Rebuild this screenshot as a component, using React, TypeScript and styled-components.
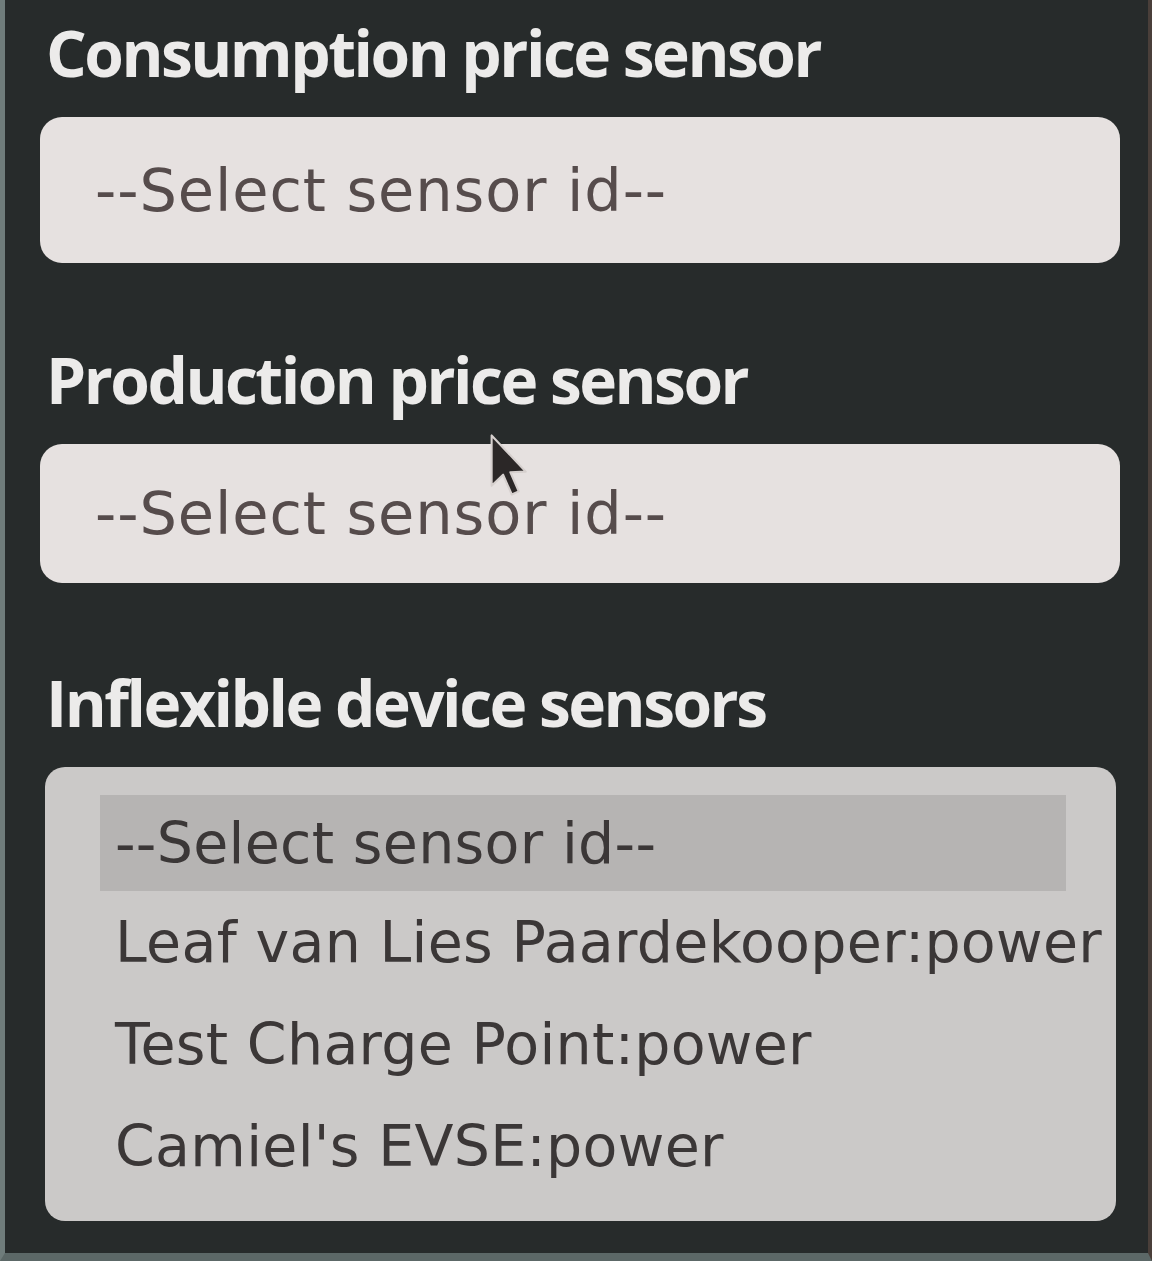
import React from "react";
import styled, { createGlobalStyle } from "styled-components";

const GlobalStyle = createGlobalStyle`
  html, body {
    margin: 0;
    padding: 0;
    background: #262a2a;
  }
  body {
    font-family: "Open Sans", "Liberation Sans", sans-serif;
  }
`;

const Frame = styled.div`
  box-sizing: border-box;
  width: 1152px;
  height: 1261px;
  background: #272b2b;
  border-left: 5px solid #6f7c7b;
  border-right: 4px solid #4a3f3a;
  border-bottom: 8px solid #5c6867;
  padding: 13px 28px 0 35px;
  display: flex;
  flex-direction: column;
  overflow: hidden;
`;

const Field = styled.div<{ $gap: number }>`
  display: flex;
  flex-direction: column;
  margin-bottom: ${(p) => p.$gap}px;
`;

const Label = styled.label`
  font-weight: 700;
  font-size: 64px;
  line-height: 80px;
  letter-spacing: -2.5px;
  color: #ecebea;
  padding-left: 6px;
  margin-bottom: 24px;
`;

const SelectBox = styled.div<{ $h: number }>`
  position: relative;
  box-sizing: border-box;
  height: ${(p) => p.$h}px;
  border-radius: 22px;
  background: #e6e1e0;
  display: flex;
  align-items: center;
  padding-left: 55px;
  font-family: "DejaVu Sans", "Open Sans", sans-serif;
  font-size: 59px;
  letter-spacing: 0.9px;
  color: #564c4c;
`;

const ListBox = styled.div`
  box-sizing: border-box;
  height: 454px;
  margin: 0 4px 0 5px;
  border-radius: 20px;
  background: #cbc9c8;
  padding: 28px 0 0 55px;
  overflow: hidden;
  display: flex;
  flex-direction: column;
`;

const Option = styled.div<{ $active?: boolean }>`
  height: 102px;
  display: flex;
  align-items: center;
  padding-left: 15px;
  margin-right: 50px;
  white-space: nowrap;
  font-family: "DejaVu Sans", "Open Sans", sans-serif;
  font-size: 57px;
  letter-spacing: 0.3px;
  color: #3b3737;
  background: ${(p) => (p.$active ? "#b6b4b3" : "transparent")};
  &:first-child {
    height: 96px;
  }
`;

const Cursor = styled.svg`
  position: absolute;
  left: 448px;
  top: -12px;
  width: 42px;
  height: 66px;
  overflow: visible;
`;

const sensors = [
  "--Select sensor id--",
  "Leaf van Lies Paardekooper:power",
  "Test Charge Point:power",
  "Camiel's EVSE:power",
];

export default function App() {
  return (
    <>
      <GlobalStyle />
      <Frame>
        <Field $gap={77}>
          <Label>Consumption price sensor</Label>
          <SelectBox $h={146}>--Select sensor id--</SelectBox>
        </Field>
        <Field $gap={80}>
          <Label>Production price sensor</Label>
          <SelectBox $h={139}>
            --Select sensor id--
            <Cursor viewBox="0 0 12 19">
              <path
                d="M1 1 L1 15.5 L4.3 12.3 L6.8 18 L8.8 17.1 L6.4 11.6 L10.8 11.4 Z"
                fill="#2b2727"
                stroke="#d6d0ce"
                strokeWidth="0.6"
                strokeLinejoin="round"
              />
            </Cursor>
          </SelectBox>
        </Field>
        <Field $gap={0}>
          <Label>Inflexible device sensors</Label>
          <ListBox>
            {sensors.map((s, i) => (
              <Option key={s} $active={i === 0}>
                {s}
              </Option>
            ))}
          </ListBox>
        </Field>
      </Frame>
    </>
  );
}
